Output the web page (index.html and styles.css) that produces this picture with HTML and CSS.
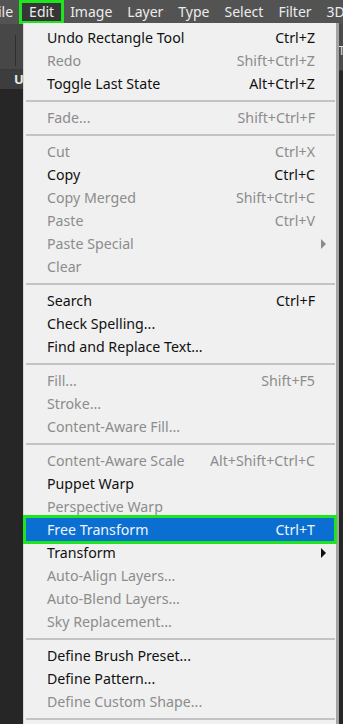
FILE: index.html
```html
<!DOCTYPE html>
<html>
<head>
<meta charset="utf-8">
<link rel="stylesheet" href="styles.css">
</head>
<body>
<div class="app">
  <div class="menubar">
    <span class="mb-item mb-cut">ile</span>
    <span class="mb-item mb-active">Edit</span>
    <span class="mb-item mb-first">Image</span>
    <span class="mb-item">Layer</span>
    <span class="mb-item">Type</span>
    <span class="mb-item">Select</span>
    <span class="mb-item">Filter</span>
    <span class="mb-item">3D</span>
  </div>
  <div class="workarea">
    <div class="leftcol">
      <div class="opts"><span class="vline"></span></div>
      <div class="tab">U</div>
      <div class="dark"></div>
    </div>
    <div class="center"></div>
    <div class="rightcol">
      <div class="ropts"><span class="rt">T</span></div>
      <div class="dark"></div>
    </div>
  </div>

  <div class="dropdown">
    <div class="mi"><span>Undo Rectangle Tool</span><span class="sc">Ctrl+Z</span></div>
    <div class="mi dis"><span>Redo</span><span class="sc">Shift+Ctrl+Z</span></div>
    <div class="mi"><span>Toggle Last State</span><span class="sc">Alt+Ctrl+Z</span></div>
    <div class="sep"></div>
    <div class="mi dis"><span>Fade...</span><span class="sc">Shift+Ctrl+F</span></div>
    <div class="sep"></div>
    <div class="mi dis"><span>Cut</span><span class="sc">Ctrl+X</span></div>
    <div class="mi"><span>Copy</span><span class="sc">Ctrl+C</span></div>
    <div class="mi dis"><span>Copy Merged</span><span class="sc">Shift+Ctrl+C</span></div>
    <div class="mi dis"><span>Paste</span><span class="sc">Ctrl+V</span></div>
    <div class="mi dis sub"><span>Paste Special</span><span class="arrow"></span></div>
    <div class="mi dis"><span>Clear</span></div>
    <div class="sep"></div>
    <div class="mi"><span>Search</span><span class="sc">Ctrl+F</span></div>
    <div class="mi"><span>Check Spelling...</span></div>
    <div class="mi"><span>Find and Replace Text...</span></div>
    <div class="sep"></div>
    <div class="mi dis"><span>Fill...</span><span class="sc">Shift+F5</span></div>
    <div class="mi dis"><span>Stroke...</span></div>
    <div class="mi dis"><span>Content-Aware Fill...</span></div>
    <div class="sep"></div>
    <div class="mi dis"><span>Content-Aware Scale</span><span class="sc">Alt+Shift+Ctrl+C</span></div>
    <div class="mi"><span>Puppet Warp</span></div>
    <div class="mi dis"><span>Perspective Warp</span></div>
    <div class="mi hl"><span>Free Transform</span><span class="sc">Ctrl+T</span></div>
    <div class="mi sub"><span>Transform</span><span class="arrow"></span></div>
    <div class="mi dis"><span>Auto-Align Layers...</span></div>
    <div class="mi dis"><span>Auto-Blend Layers...</span></div>
    <div class="mi dis"><span>Sky Replacement...</span></div>
    <div class="sep"></div>
    <div class="mi"><span>Define Brush Preset...</span></div>
    <div class="mi"><span>Define Pattern...</span></div>
    <div class="mi dis"><span>Define Custom Shape...</span></div>
    <div class="sep"></div>
  </div>
</div>
</body>
</html>
```

FILE: styles.css
```css
* { box-sizing: border-box; }
html, body { margin: 0; padding: 0; }
body {
  background: #262626;
  font-family: "Noto Sans", "Open Sans", sans-serif;
  overflow: hidden;
}
.app {
  position: relative;
  width: 343px;
  height: 724px;
  background: #262626;
  display: flex;
  flex-direction: column;
  overflow: hidden;
}
.menubar {
  height: 24px;
  background: #535353;
  display: flex;
  align-items: stretch;
  white-space: nowrap;
  color: #ececec;
  font-size: 14px;
}
.mb-item {
  display: flex;
  align-items: center;
  padding: 0 7px 0 8px;
  line-height: 1;
  flex-shrink: 0;
}
.mb-cut {
  margin-left: -10px;
  padding-right: 6px;
}
.mb-first { padding-left: 6px; }
.mb-active {
  background: #363636;
  border: 3px solid #1ee51e;
  padding: 0;
  width: 45px;
  justify-content: center;
}
.workarea {
  flex: 1;
  display: flex;
}
.leftcol {
  width: 24px;
  display: flex;
  flex-direction: column;
}
.opts {
  height: 46px;
  background: #474747;
  position: relative;
  border-bottom: 1px solid #3a3a3a;
}
.vline {
  position: absolute;
  left: 15px;
  top: 11px;
  width: 1px;
  height: 31px;
  background: #2e2e2e;
}
.tab {
  height: 19px;
  background: #3d3d3d;
  color: #e8e8e8;
  font-weight: 700;
  font-size: 13px;
  padding-left: 14px;
  line-height: 19px;
}
.dark {
  flex: 1;
  background: #262626;
}
.center { flex: 1; }
.rightcol {
  width: 5px;
  display: flex;
  flex-direction: column;
}
.ropts {
  height: 47px;
  background: #4b4b4b;
  color: #ddd;
  font-size: 13px;
  padding-top: 17px;
  overflow: hidden;
  border-bottom: 1px solid #3a3a3a;
}

.dropdown {
  position: absolute;
  left: 23px;
  top: 23px;
  width: 316px;
  height: 720px;
  background: #f0f0f0;
  border-left: 1px solid #d6d6d6;
  border-right: 3px solid #a3a3a3;
  padding-top: 3px;
  color: #111;
  font-size: 14.2px;
}
.mi {
  height: 23px;
  display: flex;
  align-items: center;
  justify-content: space-between;
  padding: 0 21px 0 23px;
  white-space: nowrap;
  position: relative;
}
.mi.dis { color: #8c8c8c; }
.sc { text-align: right; }
.sep {
  height: 11px;
  display: flex;
  align-items: center;
  padding: 0 1px 0 2px;
}
.sep::before {
  content: "";
  display: block;
  width: 100%;
  height: 2px;
  background: #c3c3c3;
}
.arrow {
  position: absolute;
  right: 10px;
  top: 50%;
  margin-top: -5px;
  width: 0;
  height: 0;
  border-top: 5px solid transparent;
  border-bottom: 5px solid transparent;
  border-left: 5px solid #111;
}
.mi.dis .arrow { border-left-color: #8c8c8c; }
.mi.hl {
  background: #0b6fd1;
  color: #eef4fb;
  outline: 3px solid #1ee51e;
  outline-offset: 0;
  margin: 0 2px 0 2px;
  padding: 0 19px 0 21px;
  z-index: 1;
}
```
